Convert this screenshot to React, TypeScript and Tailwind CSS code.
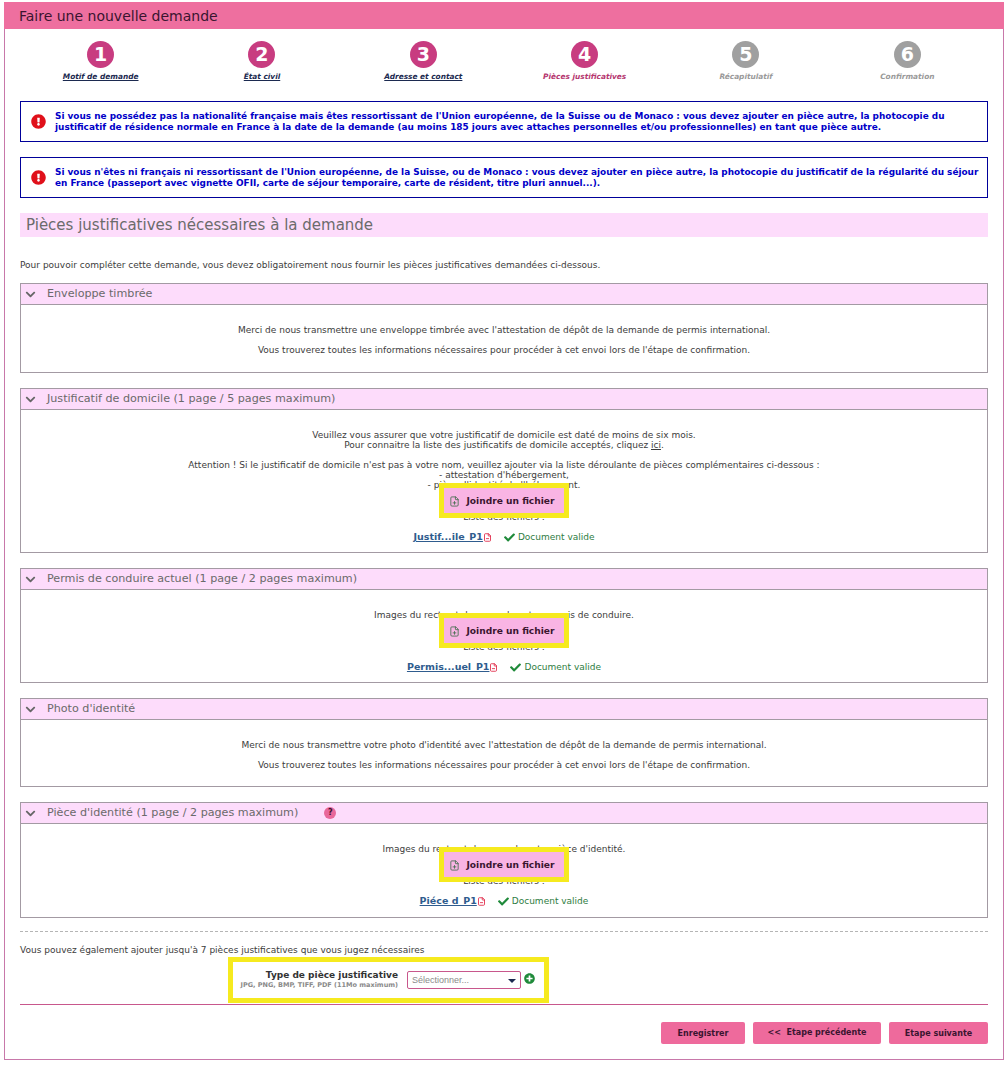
import { FaCheck, FaChevronDown, FaExclamationCircle, FaPlusCircle } from "react-icons/fa";
import { FilePlus, FileMinus } from "lucide-react";

const STEPS = [
  { n: 1, label: "Motif de demande", state: "done" },
  { n: 2, label: "État civil", state: "done" },
  { n: 3, label: "Adresse et contact", state: "done" },
  { n: 4, label: "Pièces justificatives", state: "active" },
  { n: 5, label: "Récapitulatif", state: "todo" },
  { n: 6, label: "Confirmation", state: "todo" },
];

function Stepper() {
  return (
    <div className="grid grid-cols-6 mt-[12px] mx-[15px]">
      {STEPS.map((s) => (
        <div key={s.n} className="flex flex-col items-center">
          <div
            className={`w-[27px] h-[27px] rounded-full flex items-center justify-center text-white text-[19px] font-bold ${
              s.state === "todo" ? "bg-[#a0a0a0]" : "bg-[#c83c80]"
            }`}
          >
            {s.n}
          </div>
          <div
            className={`mt-[3px] text-[7.4px] leading-[12px] font-bold italic ${
              s.state === "done"
                ? "text-[#1c2a50] underline"
                : s.state === "active"
                  ? "text-[#b5366f]"
                  : "text-[#9a9a9a]"
            }`}
          >
            {s.label}
          </div>
        </div>
      ))}
    </div>
  );
}

function Alert({ children }: { children: React.ReactNode }) {
  return (
    <div className="h-[41px] border border-[#00009a] flex items-center pl-[10px] pr-[3px] gap-[9px]">
      <FaExclamationCircle className="text-[#e0101a] text-[15px] shrink-0" />
      <p className="text-[#0000c8] text-[8.92px] leading-[11px] font-bold">{children}</p>
    </div>
  );
}

function Card({
  title,
  help,
  className,
  children,
}: {
  title: string;
  help?: boolean;
  className: string;
  children: React.ReactNode;
}) {
  return (
    <section className={`border border-[#a39aa3] flex flex-col ${className}`}>
      <header className="h-[21px] shrink-0 bg-[#fddcfb] border-b border-[#a39aa3] flex items-center pl-[4px] text-[11.15px] text-[#6a6a6a]">
        <FaChevronDown className="text-[11px] text-[#666] mr-[11px]" />
        <span>{title}</span>
        {help && (
          <span className="ml-[26px] w-[12px] h-[12px] rounded-full bg-[#e8679a] text-[#3a1530] text-[8px] font-bold flex items-center justify-center">
            ?
          </span>
        )}
      </header>
      <div className="text-center text-[9px] leading-[10px] text-[#3c3c3c]">{children}</div>
    </section>
  );
}

function FileBlock({ name }: { name: string }) {
  return (
    <div className="flex flex-col items-center">
      <button className="relative z-10 -mt-[7px] w-[130px] h-[35px] border-[5px] border-[#f6ea1f] bg-[#f9b4e4] flex items-center justify-center gap-[6px] pr-[4px] pt-px text-[9.1px] font-bold text-[#3a1530]">
        <FilePlus size={11} strokeWidth={1.8} className="text-[#3f6b4a]" />
        Joindre un fichier
      </button>
      <div className="-mt-[6px]">Liste des fichiers :</div>
      <div className="mt-[8px] h-[14px] flex items-center text-[9.5px]">
        <a className="font-bold text-[#2f5c8e] underline">{name}</a>
        <FileMinus size={9} strokeWidth={2.2} className="text-[#e02040]" />
        <FaCheck className="ml-[12px] mr-[3px] text-[11px] text-[#1f8a3a]" />
        <span className="text-[#2e7d42] text-[9px]">Document valide</span>
      </div>
    </div>
  );
}

function PinkButton({ className, children }: { className: string; children: React.ReactNode }) {
  return (
    <button className={`h-[22px] rounded-[2px] bg-[#ee6a9c] text-[#3a1530] text-[8px] font-bold whitespace-pre ${className}`}>
      {children}
    </button>
  );
}

export default function App() {
  return (
    <div className="w-[1008px] h-[1065px] bg-white pt-[2px] px-[4px] font-['DejaVu_Sans',sans-serif]">
      <div className="w-[1000px] h-[1058px] border border-t-0 border-[#c878aa]">
        <div className="-mx-px h-[27px] bg-[#ee6f9f] flex items-center pl-[15px] pt-px text-[14px] text-[#3a1530]">
          Faire une nouvelle demande
        </div>
        <Stepper />

        <div className="mx-[15px]">
          <div className="mt-[18px] flex flex-col gap-[15px]">
            <Alert>
              Si vous ne possédez pas la nationalité française mais êtes ressortissant de l'Union européenne, de la
              Suisse ou de Monaco : vous devez ajouter en pièce autre, la photocopie du justificatif de résidence
              normale en France à la date de la demande (au moins 185 jours avec attaches personnelles et/ou
              professionnelles) en tant que pièce autre.
            </Alert>
            <Alert>
              Si vous n'êtes ni français ni ressortissant de l'Union européenne, de la Suisse, ou de Monaco : vous devez
              ajouter en pièce autre, la photocopie du justificatif de la régularité du séjour en France (passeport avec
              vignette OFII, carte de séjour temporaire, carte de résident, titre pluri annuel...).
            </Alert>
          </div>

          <h2 className="mt-[15px] h-[24px] bg-[#fddcfb] pl-[6px] pt-px flex items-center text-[15px] text-[#6b6b6b] font-normal">
            Pièces justificatives nécessaires à la demande
          </h2>

          <p className="mt-[23px] text-[9px] leading-[10px] text-[#3c3c3c]">
            Pour pouvoir compléter cette demande, vous devez obligatoirement nous fournir les pièces justificatives
            demandées ci-dessous.
          </p>

          <div className="mt-[13px] flex flex-col gap-[15px]">
            <Card title="Enveloppe timbrée" className="h-[90px]">
              <p className="pt-[20px]">
                Merci de nous transmettre une enveloppe timbrée avec l'attestation de dépôt de la demande de permis
                international.
              </p>
              <p className="pt-[10px]">
                Vous trouverez toutes les informations nécessaires pour procéder à cet envoi lors de l'étape de
                confirmation.
              </p>
            </Card>

            <Card title="Justificatif de domicile (1 page / 5 pages maximum)" className="h-[165px]">
              <p className="pt-[20px]">Veuillez vous assurer que votre justificatif de domicile est daté de moins de six mois.</p>
              <p>
                Pour connaitre la liste des justificatifs de domicile acceptés, cliquez <a className="underline">ici</a>.
              </p>
              <p className="pt-[10px]">
                Attention ! Si le justificatif de domicile n'est pas à votre nom, veuillez ajouter via la liste déroulante
                de pièces complémentaires ci-dessous :
              </p>
              <p>- attestation d'hébergement,</p>
              <p>- pièce d'identité de l'hébergeant.</p>
              <FileBlock name="Justif...ile_P1" />
            </Card>

            <Card title="Permis de conduire actuel (1 page / 2 pages maximum)" className="h-[115px]">
              <p className="pt-[20px]">Images du recto et du verso de votre permis de conduire.</p>
              <FileBlock name="Permis...uel_P1" />
            </Card>

            <Card title="Photo d'identité" className="h-[89px]">
              <p className="pt-[20px]">
                Merci de nous transmettre votre photo d'identité avec l'attestation de dépôt de la demande de permis
                international.
              </p>
              <p className="pt-[10px]">
                Vous trouverez toutes les informations nécessaires pour procéder à cet envoi lors de l'étape de
                confirmation.
              </p>
            </Card>

            <Card title="Pièce d'identité (1 page / 2 pages maximum)" help className="h-[116px]">
              <p className="pt-[20px]">Images du recto et du verso de votre pièce d'identité.</p>
              <FileBlock name="Piéce d_P1" />
            </Card>
          </div>

          <div className="mt-[13px] border-t border-dashed border-[#b5b5b5]" />
          <p className="mt-[13px] text-[9px] leading-[10px] text-[#3c3c3c]">
            Vous pouvez également ajouter jusqu'à 7 pièces justificatives que vous jugez nécessaires
          </p>

          <div className="mt-[2px] ml-[208px] w-[321px] h-[46px] border-[5px] border-[#f6ea1f] flex items-center pl-[4px]">
            <div className="w-[161px] text-right mb-[2px]">
              <div className="text-[9px] leading-[11px] font-bold text-[#333]">Type de pièce justificative</div>
              <div className="text-[6.5px] leading-[8px] font-bold text-[#8a8a8a] whitespace-nowrap">
                JPG, PNG, BMP, TIFF, PDF (11Mo maximum)
              </div>
            </div>
            <div className="ml-[9px] w-[114px] h-[18px] border border-[#c8578c] rounded-[2px] flex items-center justify-between pl-[4px] pr-[4px] pt-px font-['Liberation_Sans',sans-serif] text-[9px] text-[#8a8a8a]">
              Sélectionner...
              <span className="w-0 h-0 border-x-[4px] border-x-transparent border-t-[4px] border-t-[#1c2a50]" />
            </div>
            <FaPlusCircle className="ml-[3px] mb-[4px] text-[11px] text-[#1f8a3a]" />
          </div>

          <div className="mt-px border-t border-[#c8578c]" />

          <div className="mt-[17px] flex justify-end gap-[8px]">
            <PinkButton className="w-[84px] pt-px">Enregistrer</PinkButton>
            <PinkButton className="w-[128px]">{"<<  Etape précédente"}</PinkButton>
            <PinkButton className="w-[99px] pt-[2px]">Etape suivante</PinkButton>
          </div>
        </div>
      </div>
    </div>
  );
}
